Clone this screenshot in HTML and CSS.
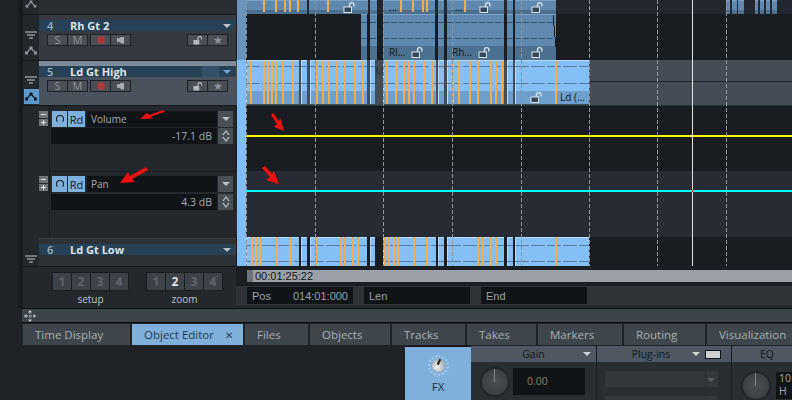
FILE: index.html
```html
<!DOCTYPE html>
<html lang="en">
<head>
  <meta charset="UTF-8" />
  <title>Arrangement</title>
  <link rel="stylesheet" href="styles.css">
</head>
<body>
  <svg class="defs" width="0" height="0">
    <symbol id="i-env" viewBox="0 0 12 9"><path d="M1.5 7 6 2 10.500 7" fill="none" stroke="currentColor" stroke-width="1.2"/><rect x="0" y="5.500" width="3" height="3" fill="currentColor"/><rect x="4.500" y="0.500" width="3" height="3" fill="currentColor"/><rect x="9" y="5.500" width="3" height="3" fill="currentColor"/></symbol>
    <symbol id="i-lanes" viewBox="0 0 12 8"><path d="M0 1h12M2 4h8M4 7h4" fill="none" stroke="currentColor" stroke-width="1.500"/></symbol>
    <symbol id="i-lock" viewBox="0 0 10 10"><path d="M5.500 5V2.600a2 2 0 0 1 4 0V4" fill="none" stroke="currentColor" stroke-width="1.300"/><rect x="0.500" y="4.500" width="6.500" height="5" fill="currentColor"/></symbol>
    <symbol id="i-lock-o" viewBox="0 0 12 11"><path d="M6.500 5.500V2.800a2.200 2.200 0 0 1 4.400 0V4.500" fill="none" stroke="currentColor" stroke-width="1.400"/><rect x="1" y="5" width="7.500" height="5.500" fill="#33475a" stroke="currentColor"/></symbol>
    <symbol id="i-updown" viewBox="0 0 8 12"><path d="M1 5 4 1l3 4M1 7l3 4 3-4" fill="none" stroke="currentColor" stroke-width="1.200"/></symbol>
    <symbol id="i-arrow" viewBox="0 0 28 16" preserveAspectRatio="none"><path d="M0 16 8 5 10 9 26 0 28 3 12 12 15 15Z" fill="#f01010"/></symbol>
    <symbol id="i-arrow-down" viewBox="0 0 17 18" preserveAspectRatio="none"><path d="M3 0 10 8 12 5 17 18 4 14 8 11 0 2Z" fill="#f01010"/></symbol>
  </svg>

  <div class="app">
    <div class="upper">
      <div class="gutter"></div>
      <div class="tracks">
        <div class="trk trk-3">
          <div class="trk-icons"><svg class="ic"><use href="#i-env"/></svg></div>
          <div class="trk-main"></div>
        </div>

        <div class="trk trk-4">
          <div class="trk-icons">
            <svg class="ic-l"><use href="#i-lanes"/></svg>
            <svg class="ic"><use href="#i-env"/></svg>
          </div>
          <div class="trk-main">
            <div class="trk-head"><span class="num">4</span><b>Rh Gt 2</b><i class="tri"></i></div>
            <div class="trk-btns">
              <span class="seg"><span class="b">S</span><span class="b">M</span></span>
              <span class="seg"><span class="b"><i class="rec"></i></span><span class="b"><i class="mon"></i></span></span>
              <span class="seg right"><span class="b"><svg class="lock"><use href="#i-lock"/></svg></span><span class="b">★</span></span>
            </div>
          </div>
        </div>

        <div class="trk trk-5">
          <div class="trk-icons">
            <svg class="ic-l"><use href="#i-lanes"/></svg>
            <span class="env-on"><svg class="ic"><use href="#i-env"/></svg></span>
          </div>
          <div class="trk-main">
            <div class="trk-head"><span class="num">5</span><b>Ld Gt High</b><i class="tri tri-blue"></i></div>
            <div class="trk-btns">
              <span class="seg"><span class="b">S</span><span class="b">M</span></span>
              <span class="seg"><span class="b"><i class="rec"></i></span><span class="b"><i class="mon"></i></span></span>
              <span class="seg right"><span class="b"><svg class="lock"><use href="#i-lock"/></svg></span><span class="b">★</span></span>
            </div>
          </div>
        </div>

        <div class="auto">
          <div class="lane lane-vol">
            <div class="pm"><span class="minus"></span><span class="plus"></span></div>
            <div class="lane-body">
              <div class="lane-row">
                <span class="tog"><i class="pow"></i></span><span class="tog tog-rd">Rd</span>
                <span class="param">Volume<svg class="arrow arrow-a"><use href="#i-arrow"/></svg></span>
                <span class="side"><i class="tri"></i></span>
              </div>
              <div class="lane-row">
                <span class="val">-17.1 dB</span>
                <span class="side"><svg class="ud"><use href="#i-updown"/></svg></span>
              </div>
            </div>
          </div>
          <div class="lane lane-pan">
            <div class="pm"><span class="minus"></span><span class="plus"></span></div>
            <div class="lane-body">
              <div class="lane-row">
                <span class="tog"><i class="pow"></i></span><span class="tog tog-rd">Rd</span>
                <span class="param">Pan<svg class="arrow arrow-b"><use href="#i-arrow"/></svg></span>
                <span class="side"><i class="tri"></i></span>
              </div>
              <div class="lane-row">
                <span class="val">4.3 dB</span>
                <span class="side"><svg class="ud"><use href="#i-updown"/></svg></span>
              </div>
            </div>
          </div>
        </div>

        <div class="trk trk-6">
          <div class="trk-icons"><svg class="ic-l"><use href="#i-lanes"/></svg></div>
          <div class="trk-main">
            <div class="trk-head"><span class="num">6</span><b>Ld Gt Low</b><i class="tri"></i></div>
          </div>
        </div>

        <div class="presets">
          <div class="preset">
            <div class="nums"><span>1</span><span>2</span><span>3</span><span>4</span></div>
            <div class="lbl">setup</div>
          </div>
          <div class="preset">
            <div class="nums"><span>1</span><span class="cur">2</span><span>3</span><span>4</span></div>
            <div class="lbl">zoom</div>
          </div>
        </div>
      </div>

      <div class="arrange">
        <div class="canvas" id="canvas"></div>
        <div class="timewrap">
          <div class="timebar"><span class="time-knob"></span><span>00:01:25:22</span></div>
        </div>
        <div class="fields">
          <div class="field"><span>Pos</span><span>014:01:000</span></div>
          <div class="field"><span>Len</span></div>
          <div class="field"><span>End</span></div>
        </div>
      </div>
    </div>

    <div class="dock">
      <svg class="move" width="12" height="12" viewBox="0 0 12 12"><path d="M6 0 8 2.500H4ZM6 12 4 9.500H8ZM0 6 2.500 4V8ZM12 6 9.500 8V4Z" fill="#cfd4d8"/><path d="M6 3v6M3 6h6" stroke="#cfd4d8" stroke-dasharray="1 1"/></svg>
    </div>

    <div class="tabs">
      <span class="tab w-td">Time Display</span>
      <span class="tab tab-on w-oe">Object Editor<i class="x">✕</i></span>
      <span class="tab w-fi">Files</span>
      <span class="tab w-ob">Objects</span>
      <span class="tab w-tr">Tracks</span>
      <span class="tab w-ta">Takes</span>
      <span class="tab w-ma">Markers</span>
      <span class="tab w-ro">Routing</span>
      <span class="tab w-vi">Visualization</span>
    </div>

    <div class="bottom">
      <div class="fx">
        <span class="fx-knob"><i></i></span>
        <span class="fx-lbl">FX</span>
      </div>
      <div class="mod mod-gain">
        <div class="mod-head">Gain<i class="tri tri-w"></i></div>
        <div class="mod-body">
          <span class="knob"></span>
          <span class="readout">0.00</span>
        </div>
      </div>
      <div class="mod mod-plug">
        <div class="mod-head">Plug-ins<i class="tri tri-w"></i><i class="swatch"></i></div>
        <div class="mod-body col">
          <span class="slot"><i class="tri tri-dim"></i></span>
          <span class="slot"></span>
        </div>
      </div>
      <div class="mod mod-eq">
        <div class="mod-head">EQ<i class="tri tri-w"></i></div>
        <div class="mod-body">
          <span class="knob"></span>
          <span class="readout small">10<br>H</span>
        </div>
      </div>
    </div>
  </div>

  <script>
    // rows: top, height, background
    const rows = [
      [0, 14, '#232830'], [14, 46, '#191d21'], [60, 45, '#444c55'], [105, 1, '#2c3238'],
      [106, 65, '#191d21'], [171, 66, '#272b34'], [237, 29, '#191d21']
    ];
    // clip x ranges per track
    const top3 = [[246,307],[309,368],[370,377],[383,435],[438,444],[447,504],[507,513],[515,556],[726,730],[732,737],[738,744],[755,758],[760,764],[766,770],[772,777]];
    const top4 = [[361,367],[370,377],[383,435],[438,444],[447,504],[507,513],[515,556]];
    const ranges = [[246,299],[301,307],[310,367],[370,375],[383,436],[438,444],[447,504],[507,513],[515,589]];
    const orange3 = [263,275,284,289,297,327,400,412,422,426,464];
    const orange5 = [250,263,267,271,275,282,292,316,322,328,336,344,354,362,386,395,403,408,413,423,431,452,458,469,477,490,495,501,555];
    const orange6 = [251,255,259,276,289,315,340,344,352,357,384,388,393,397,413,426,477,482,490,495,555];
    const labels = [['...',389,1],['...',455,1],['Rl...',389,46],['Rh...',452,46],['Ld (...',560,91]];
    const locks = [[343,2],[479,2],[531,2],[411,47],[478,47],[531,47],[530,92]];
    const dashes = [246,315,383,452,521,589,657,726];

    const canvas = document.getElementById('canvas');
    function add(cls, css, text) {
      const d = document.createElement('div');
      d.className = cls;
      d.style.cssText = css;
      if (text) d.textContent = text;
      canvas.appendChild(d);
      return d;
    }
    const x0 = x => x - 236;

    rows.forEach(r => add('row', `top:${r[0]}px;height:${r[1]}px;background:${r[2]}`));
    add('hline', 'top:81px;left:354px;width:202px');
    add('clip-lbl clip-lbl-faint', `left:${x0(375)}px;top:65px`, 'Ma');

    top3.forEach(r => add('clip clip-mid', `left:${x0(r[0])}px;top:0;width:${r[1]-r[0]}px;height:14px`));
    top4.forEach(r => {
      add('clip clip-mid', `left:${x0(r[0])}px;top:14px;width:${r[1]-r[0]}px;height:46px`);
      add('wave wave-dark', `left:${x0(r[0])}px;top:22px;width:${r[1]-r[0]}px`);
      add('wave wave-dark', `left:${x0(r[0])}px;top:38px;width:${r[1]-r[0]}px`);
    });
    add('tick', `left:${x0(553)}px;top:15px;height:11px`);
    add('tick', `left:${x0(554)}px;top:26px;height:11px`);
    add('tick', `left:${x0(555)}px;top:37px;height:10px`);
    orange3.forEach(x => add('mark', `left:${x0(x)}px;top:0;height:12px`));

    ranges.forEach(r => {
      add('clip clip-hi', `left:${x0(r[0])}px;top:60px;width:${r[1]-r[0]}px;height:44px`);
      add('wave', `left:${x0(r[0])}px;top:66px;width:${r[1]-r[0]}px`);
      add('wave', `left:${x0(r[0])}px;top:83px;width:${r[1]-r[0]}px`);
    });
    orange5.forEach(x => add('mark', `left:${x0(x)}px;top:61px;height:43px`));

    ranges.forEach(r => {
      add('clip clip-hi6', `left:${x0(r[0])}px;top:237px;width:${r[1]-r[0]}px;height:29px`);
      add('wave', `left:${x0(r[0])}px;top:245px;width:${r[1]-r[0]}px`);
      add('wave', `left:${x0(r[0])}px;top:261px;width:${r[1]-r[0]}px`);
    });
    orange6.forEach(x => add('mark', `left:${x0(x)}px;top:237px;height:29px`));

    add('strip strip-a', 'top:0;height:60px');
    add('strip strip-b', 'top:60px;height:206px');

    labels.forEach(l => add('clip-lbl', `left:${x0(l[1])}px;top:${l[2]}px`, l[0]));
    locks.forEach(l => {
      add('clip-lock', `left:${x0(l[0])}px;top:${l[1]}px`).innerHTML = '<svg><use href="#i-lock-o"/></svg>';
    });

    add('auto-line yellow', 'top:135px');
    add('auto-line cyan', 'top:190px');
    dashes.forEach(x => add('dash', `left:${x0(x)}px`));
    add('cursor', `left:${x0(692)}px`);
    add('red-dot', `left:${x0(692)}px;top:190px`);
    add('arrow-pos', `left:${x0(271)}px;top:113px;width:13px;height:18px`).innerHTML = '<svg><use href="#i-arrow-down"/></svg>';
    add('arrow-pos', `left:${x0(262)}px;top:166px;width:17px;height:18px`).innerHTML = '<svg><use href="#i-arrow-down"/></svg>';
  </script>
</body>
</html>
```

FILE: styles.css
```css
html, body { margin: 0; padding: 0; overflow: hidden; background: #1f2327; font-family: "Open Sans", sans-serif; }
.defs { position: absolute; }
.app { width: 792px; height: 400px; display: flex; flex-direction: column; color: #c8ced4; }

.upper { height: 308px; display: flex; }
.gutter { width: 18px; background: #1f2327; border-right: 5px solid #181b1e; }
.tracks { width: 213px; background: #24282c; display: flex; flex-direction: column; }
.arrange { flex: 1; display: flex; flex-direction: column; background: #24282c; }

/* track list */
.trk { display: flex; border-bottom: 1px solid #14171a; box-sizing: border-box; }
.trk-3 { height: 15px; }
.trk-4 { height: 46px; }
.trk-5 { height: 45px; }
.trk-6 { height: 29px; }
.trk-icons { width: 16px; display: flex; flex-direction: column; align-items: center; justify-content: flex-end; gap: 7px; padding-bottom: 5px; color: #8c949b; }
.trk-3 .trk-icons { padding-bottom: 6px; }
.trk-5 .trk-icons { gap: 5px; padding-bottom: 1px; }
.trk-6 .trk-icons { padding-bottom: 3px; }
.trk-main { flex: 1; background: #343a40; display: flex; flex-direction: column; }
.trk-3 .trk-main { background: #2a2e33; }
.trk-4 .trk-main { padding-top: 5px; }
.trk-5 .trk-main { background: #4a535d; padding-top: 5px; box-shadow: inset 0 5px 0 #7d8c9b; }
.trk-6 .trk-main { background: #2c3136; padding-top: 6px; box-shadow: inset 0 1px 0 #3c4248; }
.ic { width: 12px; height: 9px; display: block; }
.ic-l { width: 12px; height: 8px; display: block; }
.env-on { width: 15px; height: 15px; background: #5b98cc; color: #14171a; display: flex; align-items: center; justify-content: center; }

.trk-head { height: 11px; flex: none; background: #274256; display: flex; align-items: center; font-size: 11px; color: #dde4ea; }
.trk-5 .trk-head { background: linear-gradient(90deg, #274256 0, #274256 163px, #32506a 163px, #32506a 180px, #274256 180px); }
.trk-head .num { width: 31px; padding-left: 8px; box-sizing: border-box; color: #9fb2c0; font-weight: 600; }
.trk-head b { flex: 1; }
.tri { width: 0; height: 0; border-left: 4px solid transparent; border-right: 4px solid transparent; border-top: 4px solid #b9c0c6; margin-right: 5px; }
.tri-blue { border-top-color: #6aa6dc; }

.trk-btns { display: flex; gap: 2px; padding: 3px 8px 0 8px; }
.seg { display: flex; gap: 1px; height: 12px; background: #1e2226; padding: 0 1px; }
.seg.right { margin-left: auto; }
.b { width: 19px; height: 10px; margin-top: 1px; background: #4a4f55; color: #8e9398; font-size: 11px; line-height: 10px; text-align: center; display: flex; align-items: center; justify-content: center; }
.rec { width: 8px; height: 8px; border-radius: 50%; background: #a83a3c; }
.mon { width: 7px; height: 7px; background: #a9aeb3; clip-path: polygon(0 25%, 35% 25%, 65% 0, 100% 0, 100% 100%, 65% 100%, 35% 75%, 0 75%); }
.lock { width: 9px; height: 9px; color: #b5babf; }

/* automation lanes */
.auto { height: 132px; display: flex; flex-direction: column; flex: none; }
.lane { display: flex; flex: 1; }
.lane-vol { height: 66px; flex: none; }
.pm { width: 9px; margin: 5px 0 0 16px; display: flex; flex-direction: column; gap: 1px; }
.lane-pan .pm { margin-top: 4px; }
.pm span { height: 7px; background: #6e7378; position: relative; }
.pm span::before { content: ""; position: absolute; left: 2px; top: 3px; width: 5px; height: 1px; background: #e4e7ea; }
.pm .plus::after { content: ""; position: absolute; left: 4px; top: 1px; width: 1px; height: 5px; background: #e4e7ea; }
.lane-body { flex: 1; margin-left: 1px; padding: 5px 3px 0 2px; border-left: 1px solid #1b1e22; display: flex; flex-direction: column; gap: 1px; border-bottom: 1px solid #1b1e22; }
.lane-pan .lane-body { padding-top: 4px; gap: 2px; border-bottom: 0; }
.lane-row { display: flex; height: 16px; gap: 1px; flex: none; }
.tog { width: 15px; background: #7fb0dc; color: #14171a; font-size: 11px; text-align: center; display: flex; align-items: center; justify-content: center; }
.tog-rd { width: 17px; }
.pow { width: 6px; height: 6px; border: 1.5px solid #14171a; border-bottom-color: transparent; border-radius: 50%; }
.param { flex: 1; position: relative; background: #111417; margin-left: 1px; padding-left: 4px; font-size: 10px; line-height: 16px; color: #a5abb1; }
.side { width: 15px; background: #4a4f55; color: #c0c5ca; display: flex; align-items: center; justify-content: center; flex: none; }
.side .tri { margin: 0; }
.val { flex: 1; background: #111417; font-size: 10.5px; line-height: 16px; text-align: right; padding-right: 5px; margin-left: -1px; color: #a5abb1; }
.ud { width: 8px; height: 12px; }
.arrow { position: absolute; }
.arrow-a { left: 53px; top: -1px; width: 25px; height: 9px; }
.arrow-b { left: 33px; top: -9px; width: 28px; height: 16px; }

/* presets */
.presets { flex: 1; display: flex; gap: 17px; padding: 5px 0 0 29px; background: #24282c; }
.nums { display: flex; gap: 1px; background: #1a1d20; padding: 1px; height: 17px; }
.nums span { width: 18px; background: #3d4248; color: #5f656b; font-size: 12px; font-weight: 700; line-height: 17px; text-align: center; }
.nums .cur { color: #dfe3e6; }
.lbl { font-size: 10px; text-align: center; color: #bcc2c7; line-height: 14px; margin-top: 1px; }

/* arrangement */
.canvas { position: relative; height: 266px; overflow: hidden; background: #191d21; flex: none; }
.row { position: absolute; left: 0; width: 100%; }
.hline { position: absolute; height: 1px; background: #1c2126; }
.clip { position: absolute; box-sizing: border-box; }
.clip-mid { background: linear-gradient(#6089b0 0 70%, #4c708f 70%); border-top: 1px solid #7ba2c6; }
.clip-hi { background: linear-gradient(#84bff6 0 70%, #6fa0cd 70%); border-top: 1px solid #b8dcfb; border-left: 1px solid #b8dcfb; }
.clip-hi6 { background: #84bff6; border-top: 1px solid #b8dcfb; border-left: 1px solid #b8dcfb; }
.wave { position: absolute; height: 1px; background: repeating-linear-gradient(90deg, #5a7d9f 0 14px, transparent 14px 16px); }
.wave-dark { background: repeating-linear-gradient(90deg, #3a5570 0 6px, transparent 6px 8px); }
.tick { position: absolute; width: 1px; background: #14171a; }
.mark { position: absolute; width: 2px; background: #f0ac4e; }
.strip { position: absolute; left: 1px; width: 9px; }
.strip-a { background: #6a94b9; }
.strip-b { background: #84bdf3; }
.clip-lbl { position: absolute; font-size: 10px; line-height: 13px; color: #14171a; }
.clip-lbl-faint { color: #2a2f35; }
.clip-lock { position: absolute; width: 12px; height: 11px; color: #dbe4ec; }
.clip-lock svg { width: 12px; height: 11px; display: block; }
.auto-line { position: absolute; left: 10px; right: 0; height: 2px; }
.yellow { background: #ffff00; }
.cyan { background: #00ffff; }
.dash { position: absolute; top: 0; bottom: 0; width: 1px; background: repeating-linear-gradient(#8f949b 0 4px, transparent 4px 6px); }
.cursor { position: absolute; top: 0; bottom: 0; width: 1px; background: #e8e2da; }
.red-dot { position: absolute; width: 1px; height: 2px; background: #e01010; }
.arrow-pos { position: absolute; }
.arrow-pos svg { width: 100%; height: 100%; display: block; }

.timewrap { height: 20px; flex: none; box-sizing: border-box; padding: 4px 0 4px 11px; background: #1b1e22; }
.timebar { height: 12px; background: #9a9fa8; display: flex; align-items: center; font-family: "Liberation Sans", sans-serif; font-size: 11px; color: #14171a; }
.time-knob { width: 6px; height: 12px; background: #6e737b; margin-right: 2px; }
.fields { display: flex; gap: 11px; padding: 1px 0 1px 11px; background: #2f3236; height: 19px; box-sizing: border-box; flex: none; }
.field { width: 106px; height: 17px; box-sizing: border-box; padding: 0 5px; background: #111417; display: flex; justify-content: space-between; align-items: center; font-family: "Liberation Sans", sans-serif; font-size: 11px; color: #9aa2aa; }

/* dock */
.dock { height: 13px; flex: none; margin-left: 22px; background: #3c4349; border-top: 1px solid #0c0e10; border-bottom: 1px solid #0c0e10; display: flex; align-items: center; padding-left: 2px; }
.tabs { height: 22px; flex: none; margin: 1px 0 0 23px; display: flex; gap: 2px; }
.tab { height: 21px; background: #3e454b; color: #a9b0b6; font-size: 11.5px; line-height: 21px; padding-left: 12px; box-sizing: border-box; white-space: nowrap; flex: none; }
.tab-on { background: #7fb0dc; color: #2c3a48; }
.x { font-style: normal; font-size: 10px; margin-left: 11px; color: #33414e; }
.w-td { width: 107px; } .w-oe { width: 111px; } .w-fi { width: 63px; } .w-ob { width: 80px; }
.w-tr { width: 73px; } .w-ta { width: 69px; } .w-ma { width: 84px; } .w-ro { width: 81px; } .w-vi { width: 90px; }

.bottom { flex: 1; display: flex; padding-left: 405px; overflow: hidden; }
.fx { width: 66px; height: 55px; flex: none; background: #7fb0dc; display: flex; flex-direction: column; align-items: center; padding-top: 12px; box-sizing: border-box; border-top: 1px solid #0c0e10; color: #22303c; }
.fx-knob { width: 13px; height: 13px; border-radius: 50%; background: radial-gradient(circle at 40% 60%, #f4f4f4, #8a8a8a); position: relative; outline: 2px dotted #a9cbe8; outline-offset: 2px; }
.fx-knob i { position: absolute; left: 6px; top: 0; width: 2px; height: 6px; background: #222; transform: rotate(25deg); }
.fx-lbl { font-size: 11.5px; margin-top: 7px; }
.mod { flex: none; border-right: 1px solid #1a1d20; background: #2a2e33; }
.mod-gain { width: 125px; }
.mod-plug { width: 134px; }
.mod-eq { width: 70px; border: 0; }
.mod-head { height: 16px; background: #4f5862; color: #14171a; font-size: 10.5px; line-height: 16px; text-align: center; position: relative; display: flex; justify-content: center; align-items: center; }
.mod-head .tri-w { border-top-color: #cfd3d7; position: absolute; right: 5px; top: 6px; margin: 0; }
.mod-plug .mod-head { padding-right: 26px; box-sizing: border-box; }
.mod-plug .tri-w { right: 31px; }
.mod-eq .tri-w { right: -1px; }
.swatch { position: absolute; right: 10px; top: 4px; width: 14px; height: 7px; background: #cfcfcf; border: 1px solid #14171a; }
.mod-body { display: flex; align-items: flex-start; gap: 5px; padding: 6px 0 0 11px; }
.mod-body.col { flex-direction: column; gap: 9px; padding: 9px 0 0 8px; }
.mod-eq .mod-body { padding-top: 10px; gap: 7px; }
.knob { width: 26px; height: 26px; margin-top: 1px; border-radius: 50%; background: linear-gradient(90deg, transparent 12px, #7d8389 12px, #7d8389 13px, transparent 13px) 0 0 / 100% 50% no-repeat, radial-gradient(circle, #4a4f54, #36393d); box-shadow: 0 0 0 2px #22252a; flex: none; }
.readout { width: 72px; height: 27px; background: #111417; color: #8b7f63; font-size: 10.5px; line-height: 27px; padding-left: 14px; box-sizing: border-box; }
.readout.small { width: 30px; line-height: 13px; padding-left: 3px; color: #a5abb1; }
.slot { width: 113px; height: 16px; background: linear-gradient(90deg, #33383d 100px, #2a2e33 100px, #2a2e33 101px, #33383d 101px); position: relative; display: block; flex: none; }
.tri-dim { position: absolute; right: 3px; top: 7px; border-top-color: #5a5f64; margin: 0; }
```
